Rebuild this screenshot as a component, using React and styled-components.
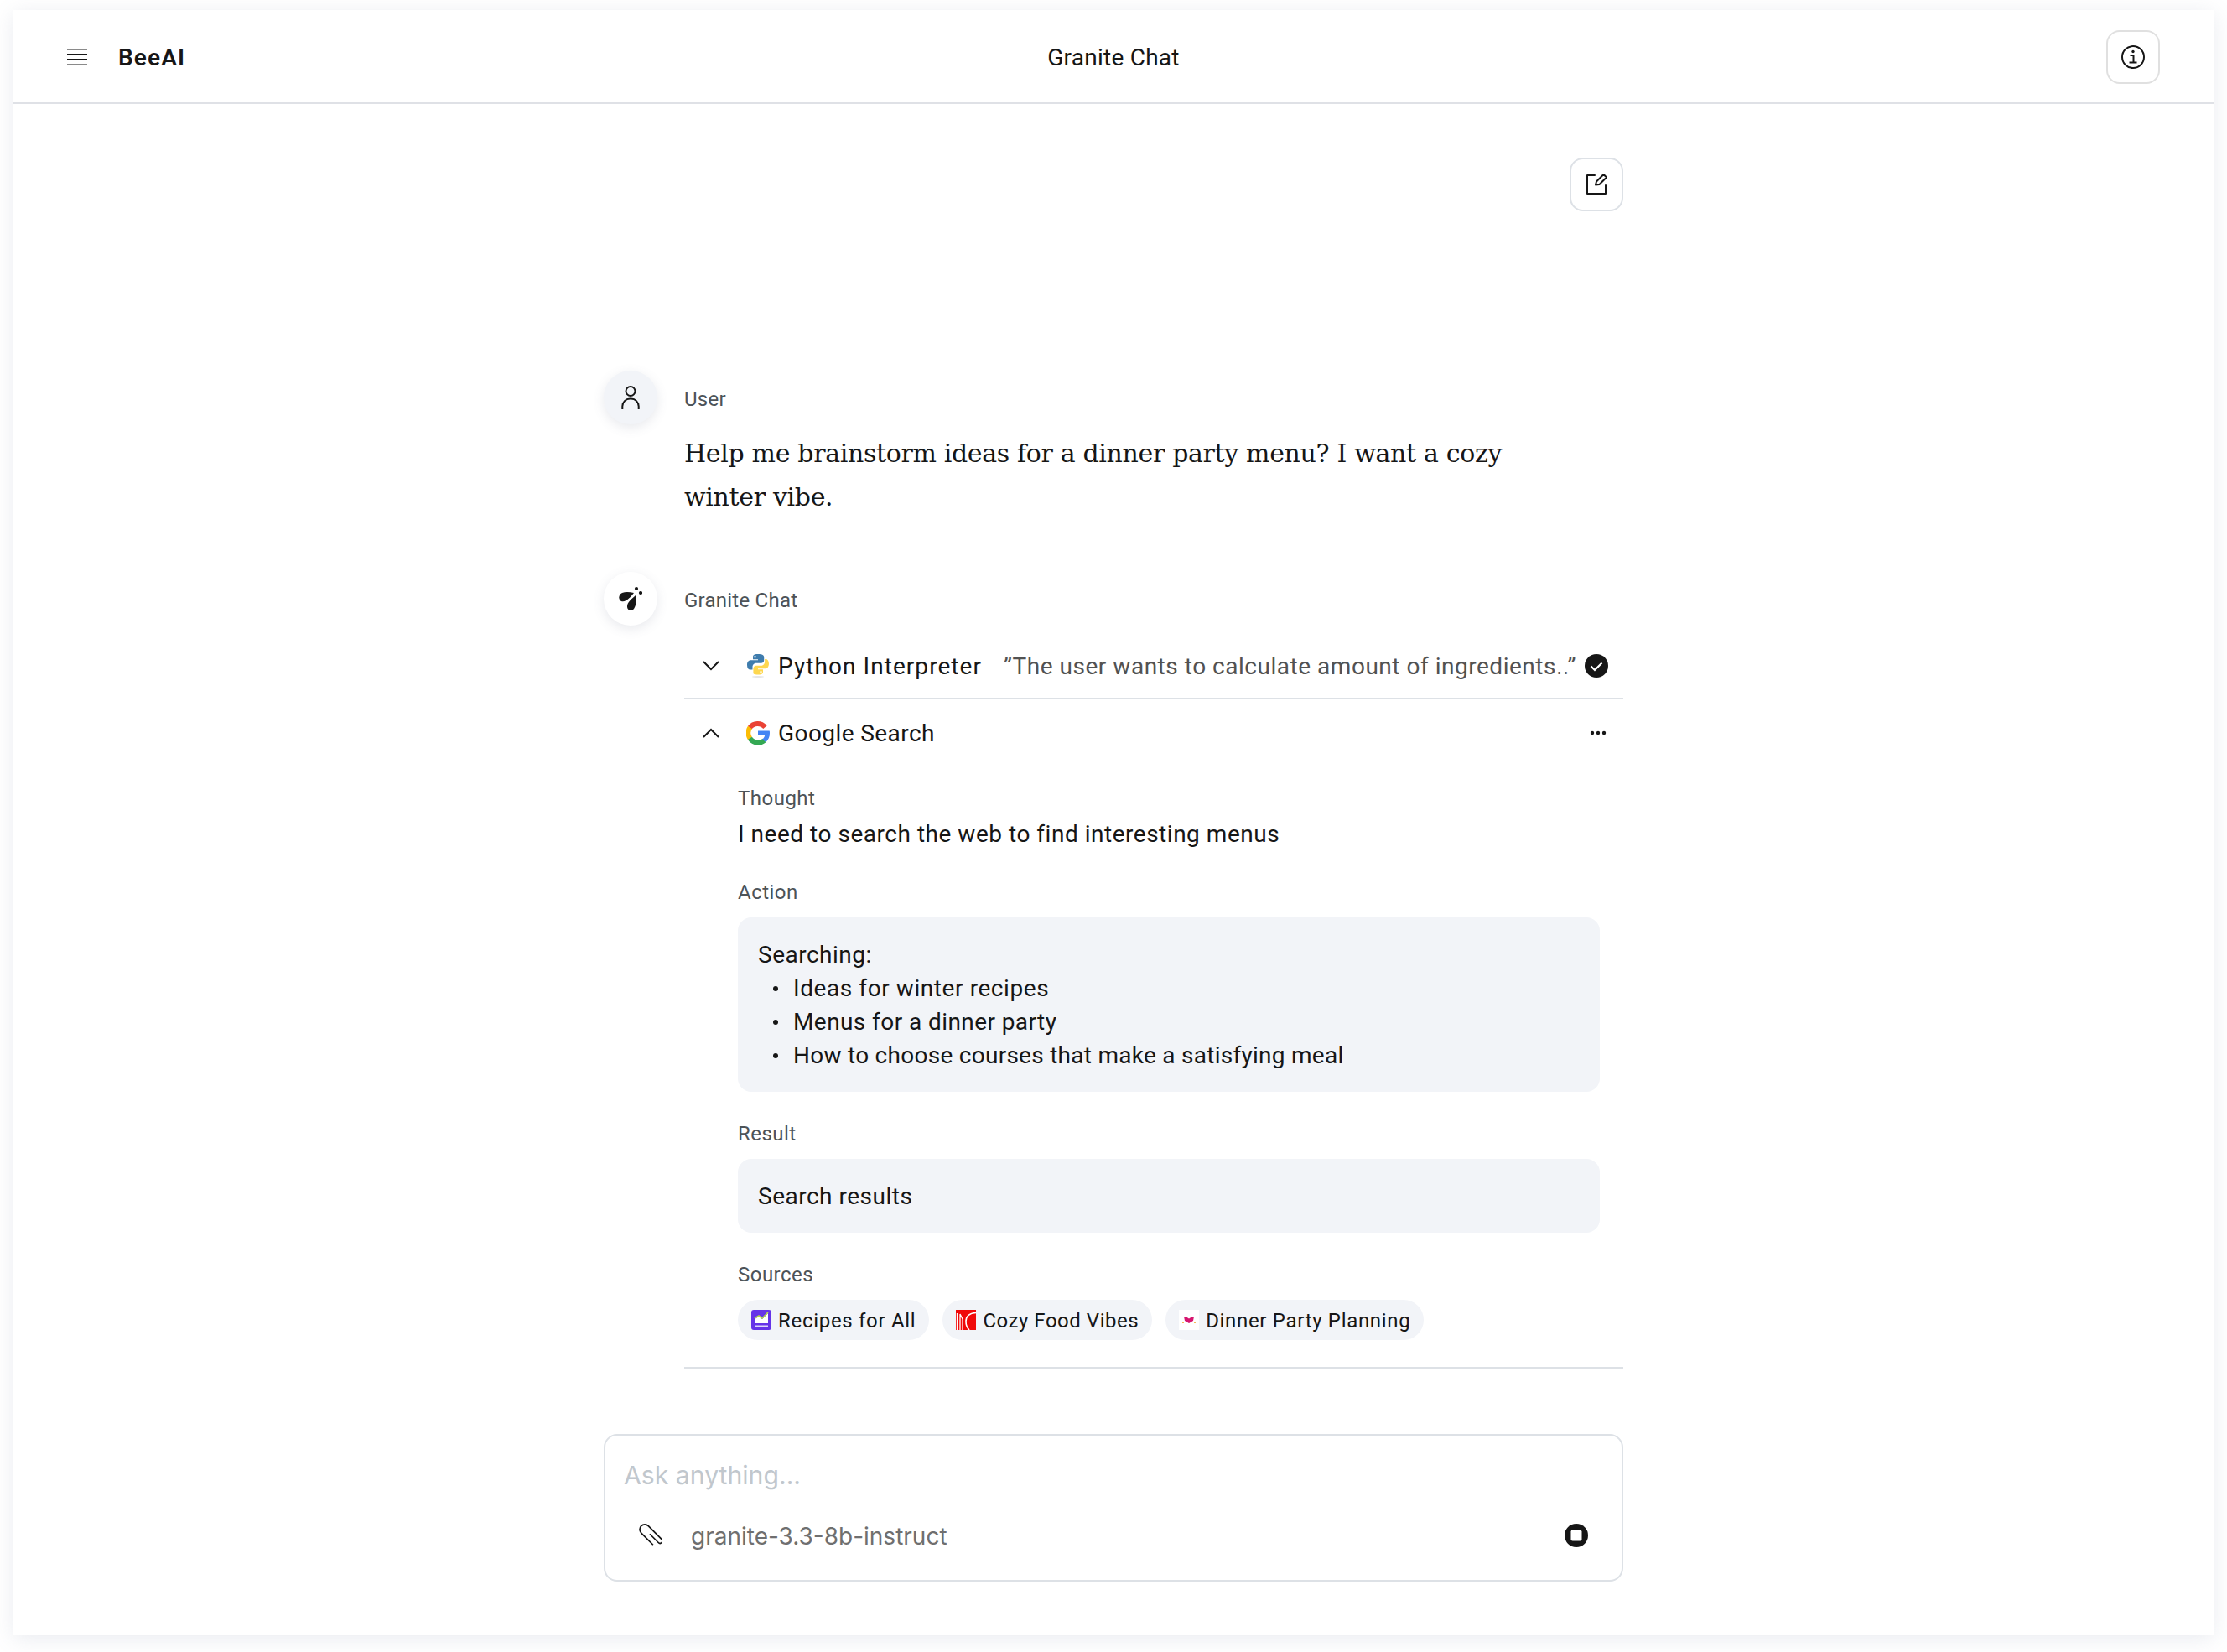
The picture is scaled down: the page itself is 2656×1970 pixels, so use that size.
import React from "react";
import styled, { createGlobalStyle } from "styled-components";

const SANS = `"Roboto", "Liberation Sans", sans-serif`;
const SERIF = `"DejaVu Serif", "Liberation Serif", serif`;
const INTER = `"Inter", "Liberation Sans", sans-serif`;

const Global = createGlobalStyle`
  html, body { margin: 0; padding: 0; background: #fff; }
  * { box-sizing: border-box; }
  body { font-family: ${SANS}; color: #161616; }
`;

const Page = styled.div`
  width: 2656px;
  height: 1970px;
  padding: 12px 16px 20px;
  overflow: hidden;
`;
const Frame = styled.div`
  height: 1938px;
  background: #fff;
  box-shadow: 0 4px 24px rgba(120, 130, 160, 0.16);
  display: flex;
  flex-direction: column;
`;
const Header = styled.header`
  height: 112px;
  flex: none;
  display: grid;
  grid-template-columns: 1fr auto 1fr;
  align-items: center;
  padding: 2px 64px 0 64px;
  border-bottom: 2px solid #dfe1e6;
`;
const Brand = styled.div`
  display: flex;
  align-items: center;
  gap: 37px;
`;
const BrandName = styled.span`
  font-size: 28px;
  font-weight: 600;
  letter-spacing: 1.1px;
  color: #161616;
`;
const HeaderTitle = styled.div`
  font-size: 28px;
  letter-spacing: 0.25px;
  color: #161616;
`;
const HeaderEnd = styled.div`
  display: flex;
  justify-content: flex-end;
`;
const IconButton = styled.button`
  width: 64px;
  height: 64px;
  padding: 0;
  background: #fff;
  border: 2px solid ${(p) => p.$border};
  border-radius: 16px;
  display: flex;
  align-items: center;
  justify-content: center;
  color: #161616;
`;
const Main = styled.main`
  width: 1216px;
  margin: 0 auto;
  padding-top: 64px;
  display: flex;
  flex-direction: column;
`;
const NewRow = styled.div`
  display: flex;
  justify-content: flex-end;
  margin-bottom: 190px;
`;
const Message = styled.section`
  display: grid;
  grid-template-columns: 64px 1fr;
  column-gap: 32px;
  margin-bottom: ${(p) => p.$gap || 0}px;
`;
const Avatar = styled.div`
  width: 64px;
  height: 64px;
  border-radius: 50%;
  background: ${(p) => p.$bg};
  box-shadow: 0 4px 14px rgba(90, 100, 130, 0.14);
  display: flex;
  align-items: center;
  justify-content: center;
  color: #161616;
`;
const Author = styled.div`
  height: 64px;
  padding-top: 4px;
  display: flex;
  align-items: center;
  font-size: 24px;
  letter-spacing: 0.24px;
  color: #4d5358;
`;
const Body = styled.div`
  min-width: 0;
`;
const Prompt = styled.p`
  margin: 9px 0 0;
  font-family: ${SERIF};
  font-size: 30px;
  line-height: 52px;
  letter-spacing: -0.34px;
  color: #161616;
  max-width: 1000px;
`;
const ToolRow = styled.div`
  display: flex;
  align-items: center;
  height: 80px;
  margin-top: ${(p) => p.$top || 0}px;
  border-bottom: ${(p) => (p.$line ? "2px solid #dde1e6" : "none")};
  padding-top: ${(p) => (p.$line ? "2px" : "0")};
`;
const Chevron = styled.span`
  width: 32px;
  margin-left: 16px;
  margin-right: 24px;
  display: flex;
  justify-content: center;
`;
const ToolIcon = styled.span`
  width: 32px;
  height: 32px;
  flex: none;
  display: flex;
  align-items: center;
  justify-content: center;
  margin-right: 8px;
`;
const ToolName = styled.span`
  font-size: 28px;
  letter-spacing: ${(p) => p.$track}px;
  color: #161616;
`;
const Quote = styled.span`
  margin-left: 26px;
  font-size: 28px;
  letter-spacing: 0.52px;
  color: #525252;
  white-space: nowrap;
`;
const RowEnd = styled.span`
  margin-left: auto;
  margin-right: ${(p) => p.$right}px;
  display: flex;
`;
const Details = styled.div`
  padding: 22px 28px 32px 64px;
  border-bottom: 2px solid #dde1e6;
`;
const FieldLabel = styled.div`
  height: 32px;
  line-height: 32px;
  font-size: 24px;
  letter-spacing: 0.48px;
  color: #4d5358;
  margin-top: ${(p) => p.$top || 0}px;
`;
const FieldText = styled.div`
  margin-top: 9px;
  font-size: 28px;
  line-height: 36px;
  letter-spacing: 0.52px;
`;
const CodeBox = styled.div`
  margin-top: 14px;
  padding: 25px 24px 23px;
  background: #f2f4f8;
  border-radius: 16px;
  font-size: 28px;
  line-height: 40px;
  letter-spacing: 0.5px;
`;
const BulletList = styled.ul`
  margin: 0;
  padding: 0 0 0 18px;
  list-style: none;
`;
const Bullet = styled.li`
  display: flex;
  align-items: center;
  letter-spacing: ${(p) => p.$track}px;
  &::before {
    content: "";
    width: 6px;
    height: 6px;
    border-radius: 50%;
    background: #161616;
    margin-right: 18px;
    flex: none;
  }
`;
const Chips = styled.div`
  margin-top: 14px;
  display: flex;
  gap: 16px;
`;
const Chip = styled.span`
  height: 48px;
  padding: 0 16px;
  border-radius: 24px;
  background: #f2f4f8;
  display: flex;
  align-items: center;
  gap: 8px;
  font-size: 24px;
  letter-spacing: ${(p) => p.$track}px;
  color: #161616;
`;
const ChipLabel = styled.span`
  padding-top: 2px;
`;
const Composer = styled.div`
  margin-top: 78px;
  height: 176px;
  border: 2px solid #dde1e6;
  border-radius: 16px;
  padding: 27px 0 0 22px;
  display: flex;
  flex-direction: column;
`;
const Placeholder = styled.div`
  font-family: ${INTER};
  font-size: 30.2px;
  line-height: 40px;
  color: #c1c7cd;
`;
const ModelRow = styled.div`
  margin-top: 38px;
  display: flex;
  align-items: center;
  height: 28px;
  padding-left: 18px;
  padding-right: 40px;
`;
const ModelName = styled.span`
  margin-left: 34px;
  font-family: ${INTER};
  font-size: 28px;
  padding-top: 2px;
  color: #6f6f6f;
`;

const MenuIcon = () => (
  <svg width="24" height="20" viewBox="0 0 24 20" fill="none" stroke="#161616" strokeWidth="2">
    <path d="M0 1h24M0 7.5h24M0 13.5h24M0 20h24" transform="translate(0 -0.5)" />
  </svg>
);
const InfoIcon = () => (
  <svg width="28" height="28" viewBox="0 0 28 28" fill="none" stroke="#161616" strokeWidth="2">
    <circle cx="14" cy="14" r="13" />
    <circle cx="14" cy="7.5" r="1.7" fill="#161616" stroke="none" />
    <path d="M10.5 12h4v8.5M9.5 20.5h9" />
  </svg>
);
const EditIcon = () => (
  <svg width="28" height="28" viewBox="0 0 28 28" fill="none" stroke="#161616" strokeWidth="2" strokeLinejoin="round" strokeLinecap="round">
    <path d="M12 3H3v22h22V15" />
    <path d="M13 14.5l1-4L22.5 2l3.5 3.5L17.5 14z" />
  </svg>
);
const UserIcon = () => (
  <svg width="28" height="28" viewBox="0 0 28 28" fill="none" stroke="#161616" strokeWidth="2">
    <circle cx="14" cy="6.5" r="5.5" />
    <path d="M4.3 28v-3.5a9 9 0 0 1 9-9h1.4a9 9 0 0 1 9 9V28" />
  </svg>
);
const BeeIcon = () => (
  <svg width="28" height="30" viewBox="0 0 28 30" fill="#161616">
    <path d="M18 8C13 7 8 6.5 4 8C-0.5 10-1 16 3 18C8 20 14 13 18 8Z" />
    <path d="M20 11C16 15 9.5 19 10 25C10.5 29.5 16 30 18 27C21 23 21 16 20 11Z" />
    <circle cx="21" cy="3" r="2.1" />
    <circle cx="26" cy="8" r="2.1" />
  </svg>
);
const ChevronIcon = ({ up }) => (
  <svg width="20" height="12" viewBox="0 0 20 12" fill="none" stroke="#161616" strokeWidth="2">
    <path d={up ? "M1 11l9-9 9 9" : "M1 1l9 9 9-9"} />
  </svg>
);
const PythonIcon = () => (
  <svg width="26" height="28" viewBox="0 0 26 28">
    <path fill="#3e7cad" d="M12.6 0C7 0 7 2.4 7 3.5V6.2h6v1H4.2C1.8 7.2 0 9.4 0 12.9c0 3.6 1.6 5.6 4 5.6h2.5v-3.2c0-2.4 2-4.5 4.6-4.5h5.6c2 0 3.5-1.6 3.5-3.6V3.5C20.2 1.6 18.6 0 12.6 0zM9.5 2a1.2 1.2 0 1 1 0 2.4 1.2 1.2 0 0 1 0-2.4z" />
    <path fill="#fdd74f" d="M13.4 24.5c5.6 0 5.6-2.4 5.6-3.5v-2.7h-6v-1h8.8c2.4 0 4.2-2.2 4.2-5.7 0-3.6-1.6-5.6-4-5.6h-.9v3.2c0 2.4-2 4.5-4.6 4.5H10.9c-2 0-3.5 1.6-3.5 3.6v4.2c-.1 1.9 0 3 6 3zm3.1-2a1.2 1.2 0 1 1 0-2.4 1.2 1.2 0 0 1 0 2.4z" />
    <ellipse cx="13" cy="27" rx="7" ry="1" fill="#e6e6e6" />
  </svg>
);
const GoogleIcon = () => (
  <svg width="28" height="28" viewBox="0 0 48 48">
    <path fill="none" stroke="#EA4335" strokeWidth="10" d="M38.5 12.2A20 20 0 0 0 7.2 13.2" />
    <path fill="none" stroke="#FBBC05" strokeWidth="10" d="M7.6 12.8A20 20 0 0 0 7.6 35.2" />
    <path fill="none" stroke="#34A853" strokeWidth="10" d="M7.4 35A20 20 0 0 0 37 39.5" />
    <path fill="#4285F4" d="M24 19.5h23.5c.4 1.5.5 3 .5 4.8 0 7.5-2.7 14-8 18.5l-7.5-6c3-2 5-4.8 5.5-8.3H24z" />
  </svg>
);
const CheckIcon = () => (
  <svg width="28" height="28" viewBox="0 0 28 28">
    <circle cx="14" cy="14" r="14" fill="#161616" />
    <path d="M7.5 14.5l4.5 4.5 8.5-8.5" fill="none" stroke="#fff" strokeWidth="2.2" />
  </svg>
);
const DotsIcon = () => (
  <svg width="20" height="6" viewBox="0 0 20 6" fill="#161616">
    <circle cx="3" cy="3" r="2.2" />
    <circle cx="10" cy="3" r="2.2" />
    <circle cx="17" cy="3" r="2.2" />
  </svg>
);
const YahooFavicon = () => (
  <svg width="24" height="24" viewBox="0 0 24 24">
    <rect width="24" height="24" rx="3" fill="#6633e8" />
    <path d="M4 16v-5l5-3 4 3 7-7v12H4z" fill="#fff" />
    <path d="M4 10l5-3 4 3 7-7" fill="none" stroke="#b4d84a" strokeWidth="1.6" />
    <rect x="4" y="18.5" width="16" height="2.5" fill="#ddd6fa" />
  </svg>
);
const RedFavicon = () => (
  <svg width="24" height="24" viewBox="0 0 24 24">
    <rect width="24" height="24" fill="#f00a0a" />
    <path d="M1.5 24V4M5 24V5l3 6v13" fill="none" stroke="#fff" strokeWidth="1.3" />
    <path d="M24 3.5C15 4 12 9 12 14c0 5 2 8 4 10" fill="none" stroke="#fff" strokeWidth="1.6" />
  </svg>
);
const HeartFavicon = () => (
  <svg width="24" height="24" viewBox="0 0 24 24">
    <rect width="24" height="24" fill="#fff" />
    <path d="M6 8l3 .5 3 2 3-2 3-.5-1 5-5 3-5-3z" fill="#d6156f" />
    <circle cx="5" cy="15" r="1" fill="#f0a020" />
    <circle cx="19" cy="15" r="1" fill="#f0a020" />
  </svg>
);
const ClipIcon = () => (
  <svg width="28" height="28" viewBox="0 0 28 28" fill="none" stroke="#161616" strokeWidth="1.7">
    <g transform="rotate(-45 14 14) translate(0 1)">
      <path d="M14.5 11V25.5a2.8 2.8 0 0 0 5.6 0V3a6 6 0 0 0-12 0V23" />
    </g>
  </svg>
);
const StopIcon = () => (
  <svg width="28" height="28" viewBox="0 0 28 28">
    <circle cx="14" cy="14" r="14" fill="#161616" />
    <rect x="7.5" y="7.5" width="13" height="13" rx="2" fill="#fff" />
  </svg>
);

export default function App() {
  return (
    <Page>
      <Global />
      <Frame>
        <Header>
          <Brand>
            <MenuIcon />
            <BrandName>BeeAI</BrandName>
          </Brand>
          <HeaderTitle>Granite Chat</HeaderTitle>
          <HeaderEnd>
            <IconButton $border="#e0e0e0" aria-label="Info"><InfoIcon /></IconButton>
          </HeaderEnd>
        </Header>
        <Main>
          <NewRow>
            <IconButton $border="#dde1e6" aria-label="New chat"><EditIcon /></IconButton>
          </NewRow>
          <Message $gap={63}>
            <Avatar $bg="#f2f4f8"><UserIcon /></Avatar>
            <Body>
              <Author>User</Author>
              <Prompt>Help me brainstorm ideas for a dinner party menu? I want a cozy winter vibe.</Prompt>
            </Body>
          </Message>
          <Message>
            <Avatar $bg="#fff"><BeeIcon /></Avatar>
            <Body>
              <Author>Granite Chat</Author>
              <ToolRow $line $top={8}>
                <Chevron><ChevronIcon /></Chevron>
                <ToolIcon><PythonIcon /></ToolIcon>
                <ToolName $track={1.06}>Python Interpreter</ToolName>
                <Quote>”The user wants to calculate amount of ingredients..”</Quote>
                <RowEnd $right={18}><CheckIcon /></RowEnd>
              </ToolRow>
              <ToolRow>
                <Chevron><ChevronIcon up /></Chevron>
                <ToolIcon><GoogleIcon /></ToolIcon>
                <ToolName $track={0.42}>Google Search</ToolName>
                <RowEnd $right={20}><DotsIcon /></RowEnd>
              </ToolRow>
              <Details>
                <FieldLabel>Thought</FieldLabel>
                <FieldText>I need to search the web to find interesting menus</FieldText>
                <FieldLabel $top={35}>Action</FieldLabel>
                <CodeBox>
                  Searching:
                  <BulletList>
                    <Bullet $track={0.58}>Ideas for winter recipes</Bullet>
                    <Bullet $track={0.42}>Menus for a dinner party</Bullet>
                    <Bullet $track={0.27}>How to choose courses that make a satisfying meal</Bullet>
                  </BulletList>
                </CodeBox>
                <FieldLabel $top={34}>Result</FieldLabel>
                <CodeBox>Search results</CodeBox>
                <FieldLabel $top={34}>Sources</FieldLabel>
                <Chips>
                  <Chip $track={0.7}><YahooFavicon /><ChipLabel>Recipes for All</ChipLabel></Chip>
                  <Chip $track={0.52}><RedFavicon /><ChipLabel>Cozy Food Vibes</ChipLabel></Chip>
                  <Chip $track={0.68}><HeartFavicon /><ChipLabel>Dinner Party Planning</ChipLabel></Chip>
                </Chips>
              </Details>
            </Body>
          </Message>
          <Composer>
            <Placeholder>Ask anything...</Placeholder>
            <ModelRow>
              <ClipIcon />
              <ModelName>granite-3.3-8b-instruct</ModelName>
              <RowEnd $right={0}><StopIcon /></RowEnd>
            </ModelRow>
          </Composer>
        </Main>
      </Frame>
    </Page>
  );
}
